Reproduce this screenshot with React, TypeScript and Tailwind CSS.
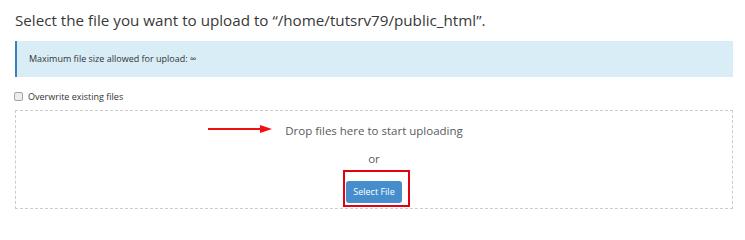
export default function App() {
  return (
    <div className="w-[745px] h-[217px] bg-white font-['Open_Sans',sans-serif] text-[#333] overflow-hidden">
      <div className="pl-[15px] pr-[12px] pt-[10px]">
        <h1 className="text-[15.2px] leading-[20px] font-normal text-[#383838]">
          Select the file you want to upload to “/home/tutsrv79/public_html”.
        </h1>
        <div className="mt-[11px] h-[36px] flex items-center bg-[#d9edf7] border-l-2 border-[#3a7fbf] pl-[12px] text-[9px] text-[#333]">
          Maximum file size allowed for upload: ∞
        </div>
        <label className="mt-[13px] h-[13px] flex items-center gap-[5px] text-[9px] text-[#333] -ml-px">
          <input
            type="checkbox"
            className="appearance-none w-[9px] h-[9px] m-0 rounded-[2px] border border-[#a5a5a5] bg-[#ececec]"
          />
          Overwrite existing files
        </label>
        <div className="mt-[7px] h-[99px] border border-dashed border-[#ccc] flex flex-col items-center">
          <div className="relative mt-[12px] text-[11.5px] leading-[16px] text-[#5a5a5a]">
            <svg
              className="absolute left-[-77px] top-0"
              width="64"
              height="12"
              viewBox="0 0 64 12"
            >
              <line x1="0" y1="6" x2="54" y2="6" stroke="#f01010" strokeWidth="2" />
              <polygon points="52,2 64,6 52,10" fill="#f01010" />
            </svg>
            Drop files here to start uploading
          </div>
          <div className="mt-[12px] text-[11.5px] leading-[16px] text-[#5a5a5a]">or</div>
          <div className="relative mt-[10px]">
            <button
              type="button"
              className="h-[22px] w-[56px] rounded-[3px] bg-[#468dcd] text-white text-[9px] leading-none"
            >
              Select File
            </button>
            <span className="pointer-events-none absolute left-[-3px] right-[-8px] top-[-7px] bottom-[-4px] border-2 border-[#e3000f]" />
          </div>
        </div>
      </div>
    </div>
  );
}
